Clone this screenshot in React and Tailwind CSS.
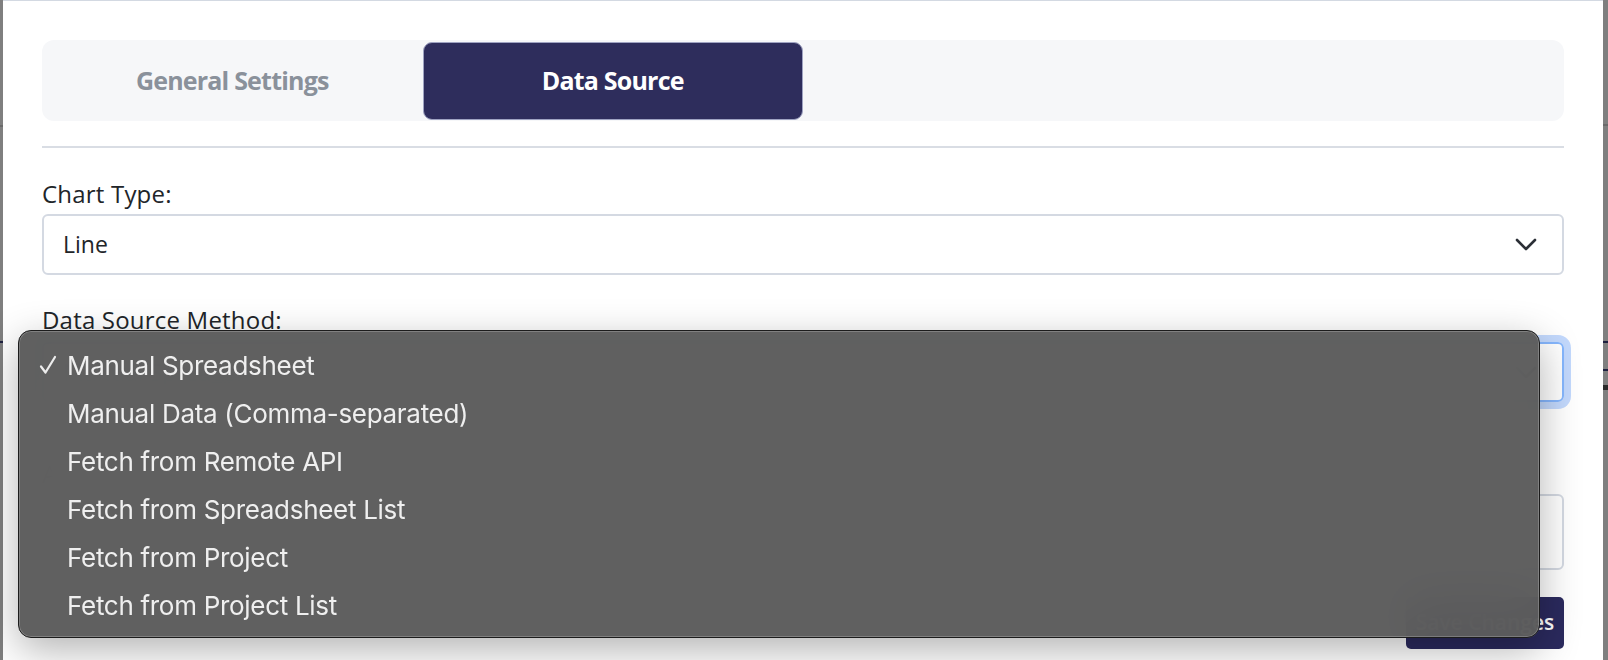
import { useState } from 'react'

const methods = [
  'Manual Spreadsheet',
  'Manual Data (Comma-separated)',
  'Fetch from Remote API',
  'Fetch from Spreadsheet List',
  'Fetch from Project',
  'Fetch from Project List',
]

function Chevron() {
  return (
    <svg width="22" height="13" viewBox="0 0 22 13" fill="none">
      <path d="M2 2l9 9 9-9" stroke="#2b2f36" strokeWidth="2.6" strokeLinecap="round" strokeLinejoin="round" />
    </svg>
  )
}

function Check() {
  return (
    <svg width="18" height="20" viewBox="0 0 18 20" fill="none">
      <path d="M2 11.5l4.5 6L16 2" stroke="#ededed" strokeWidth="2.2" strokeLinecap="round" strokeLinejoin="round" />
    </svg>
  )
}

// native-looking popup menu that hangs over the select
function MethodMenu({ selected }) {
  return (
    <div className="absolute left-[18px] top-[330px] w-[1522px] h-[308px] rounded-[13px] border border-[#1c1c1c] bg-[#5b5b5b]/[0.97] backdrop-blur-xl shadow-[0_12px_40px_rgba(0,0,0,0.3),inset_0_0_0_1px_rgba(255,255,255,0.2)] pt-[10px] font-['Inter',sans-serif] text-[26px] tracking-[-0.3px] text-[#efefef]">
      {methods.map((m) => (
        <div key={m} className="flex h-[48px] items-center">
          <span className="flex w-[48px] justify-end pr-[10px]">{m === selected && <Check />}</span>
          <span>{m}</span>
        </div>
      ))}
    </div>
  )
}

function Field({ label, children }) {
  return (
    <div className="flex flex-col gap-[5px]">
      <div className="text-[24px] leading-[30px] tracking-[0.2px] text-[#212529]">{label}</div>
      {children}
    </div>
  )
}

export default function App() {
  const [tab] = useState('data')
  const [method] = useState('Manual Spreadsheet')

  return (
    <div className="relative w-[1608px] h-[660px] overflow-hidden bg-[#7f7f7f] flex font-['Open_Sans',sans-serif]">
      <div className="ml-[3px] w-[1600px] h-full bg-white border-t border-[#d3d9e2] px-[39px] pt-[39px]">
        <div className="grid grid-cols-4 h-[81px] rounded-[12px] bg-[#f6f7f9]">
          <div className="flex items-center justify-center text-[25px] font-bold tracking-[-0.8px] text-[#8a919b]">
            General Settings
          </div>
          <div className="mt-[2px] mb-[1px] flex items-center justify-center rounded-[9px] border border-[#9fa3c2] bg-[#2e2d5c] text-[25px] font-bold tracking-[-0.8px] text-white">
            {tab === 'data' && 'Data Source'}
          </div>
        </div>

        <div className="mt-[25px] mb-[31px] h-[2px] bg-[#d9dde4]" />

        <div className="flex flex-col gap-[30px]">
          <Field label="Chart Type:">
            <div className="h-[61px] rounded-[6px] border-2 border-[#d4d9e2] flex items-center justify-between pl-[19px] pr-[25px] text-[23px] text-[#212529]">
              <span>Line</span>
              <Chevron />
            </div>
          </Field>

          <Field label="Data Source Method:">
            <div className="mt-[2px] h-[60px] rounded-[6px] border-2 border-[#86b7fe] ring-[7px] ring-[#c3d9fd] flex items-center justify-between pl-[19px] pr-[25px] text-[23px] text-[#212529]">
              <span>{method}</span>
              <Chevron />
            </div>
          </Field>

          <div className="mt-[27px]">
            <Field label="API Endpoint:">
              <div className="h-[76px] rounded-[6px] border-2 border-[#d4d9e2]" />
            </Field>
          </div>
        </div>

        <div className="mt-[27px] flex justify-end">
          <button className="h-[52px] w-[158px] rounded-[5px] bg-[#2b2a5e] text-[21px] font-semibold text-white">
            Save Changes
          </button>
        </div>
      </div>

      <div className="absolute right-0 top-[124px] w-[5px] h-[2px] bg-[#6a6a6a]" />
      <div className="absolute right-0 top-[341px] w-[5px] h-[2px] bg-[#1e2140]" />
      <div className="absolute right-0 top-[369px] w-[5px] h-[2px] bg-[#1e2140]" />
      <div className="absolute right-0 top-[385px] w-[5px] h-[5px] bg-[#2a2a2a]" />
      <div className="absolute left-0 top-[125px] w-[3px] h-[2px] bg-[#6a6a6a]" />
      <div className="absolute left-0 top-[341px] w-[3px] h-[2px] bg-[#1e2140]" />

      <MethodMenu selected={method} />
    </div>
  )
}
